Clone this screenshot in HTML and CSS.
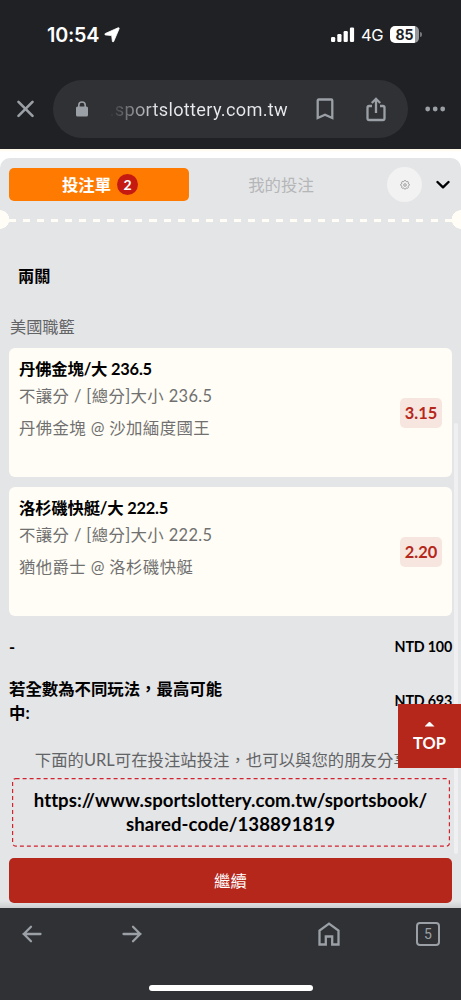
FILE: index.html
```html
<!DOCTYPE html>
<html lang="zh-TW">
<head>
    <meta charset="UTF-8">
    <meta name="viewport" content="width=device-width, initial-scale=1.0">
    <title>投注單</title>
    <link rel="stylesheet" href="styles.css">
</head>
<body>
    <header class="browser-header">
        <div class="status-bar">
            <span class="clock">10:54</span>
            <svg class="location" width="16" height="16" viewBox="0 0 16 16"><path d="M1.300 6.500 14.100.8q1.400-.4 1 1L9.700 14.500q-.7 1.100-1.300 0L7.700 8.600 1.400 7.900Q0 7.300 1.300 6.500z" fill="#fff" stroke="#fff" stroke-width=".8"/></svg>
            <svg class="signal" width="24" height="16" viewBox="0 0 24 16" fill="#fff">
                <rect x="0" y="10" width="4.200" height="5" rx="1.200"/>
                <rect x="6.300" y="7" width="4.200" height="8" rx="1.200"/>
                <rect x="12.600" y="4" width="4.200" height="11" rx="1.200"/>
                <rect x="18.900" y=".5" width="4.200" height="14.500" rx="1.200"/>
            </svg>
            <span class="network">4G</span>
            <span class="battery">85</span>
            <span class="battery-tip"></span>
        </div>
        <div class="address-row">
            <svg class="close" width="18" height="18" viewBox="0 0 18 18" fill="none" stroke="#9aa0a6" stroke-width="2.600" stroke-linecap="round"><path d="M1.500 1.800l14 14M15.500 1.800l-14 14"/></svg>
            <div class="address-bar">
                <svg class="lock" width="14" height="16" viewBox="0 0 14 16"><rect x="1" y="5.500" width="12" height="10" rx="1.500" fill="#9aa0a6"/><path d="M3.800 6V4.200a3.200 3.200 0 0 1 6.400 0V6" fill="none" stroke="#9aa0a6" stroke-width="1.600"/></svg>
                <span class="address">.sportslottery.com.tw</span>
                <svg class="bookmark" width="18" height="22" viewBox="0 0 18 22" fill="none" stroke="#9aa0a6" stroke-width="2.300"><path d="M1.700 20V2.500q0-1 1-1h12.600q1 0 1 1V20L9 16.800z"/></svg>
                <svg class="share" width="20" height="25" viewBox="0 0 20 25" fill="none" stroke="#9aa0a6" stroke-width="2.300"><path d="M6 9H3.200Q1.500 9 1.500 10.700v10.600Q1.500 23 3.200 23h13.600q1.700 0 1.700-1.700V10.700Q18.500 9 16.800 9H14M10 16V2M5.800 6 10 1.800 14.200 6"/></svg>
            </div>
            <svg class="more" width="22" height="6" viewBox="0 0 22 6" fill="#9aa0a6"><circle cx="2.700" cy="3" r="2.400"/><circle cx="10.200" cy="3" r="2.400"/><circle cx="17.700" cy="3" r="2.400"/></svg>
        </div>
    </header>

    <main class="page">
        <section class="betslip">
            <div class="tabs">
                <button class="tab tab-active">投注單<span class="count">2</span></button>
                <button class="tab">我的投注</button>
                <button class="settings">
                    <svg width="10" height="10" viewBox="0 0 10 10" fill="none" stroke="#8c8c8c" stroke-width=".8"><path d="M4.100 1.300 4.500.5h1l.4.800.9.400.9-.3.700.7-.3.900.4.900.800.400v1l-.8.400-.4.900.3.900-.7.700-.9-.3-.9.400-.4.800h-1l-.4-.8-.9-.4-.9.300-.7-.7.300-.9-.4-.9-.8-.4v-1l.8-.4.4-.9-.3-.9.700-.7.900.3z"/><circle cx="5" cy="5" r="1.300"/></svg>
                </button>
                <svg class="collapse" width="14" height="9" viewBox="0 0 14 9" fill="none" stroke="#000" stroke-width="2.400" stroke-linecap="round" stroke-linejoin="round"><path d="M1.500 2 7 7.300 12.500 2"/></svg>
            </div>

            <div class="divider"></div>

            <h2 class="slip-title">兩關</h2>
            <h3 class="league">美國職籃</h3>

            <article class="bet">
                <div>
                    <h4>丹佛金塊/大 236.5</h4>
                    <p>不讓分 / [總分]大小 236.5</p>
                    <p class="match">丹佛金塊 @ 沙加緬度國王</p>
                </div>
                <span class="odds">3.15</span>
            </article>
            <article class="bet">
                <div>
                    <h4>洛杉磯快艇/大 222.5</h4>
                    <p>不讓分 / [總分]大小 222.5</p>
                    <p class="match">猶他爵士 @ 洛杉磯快艇</p>
                </div>
                <span class="odds">2.20</span>
            </article>

            <div class="total total-stake">
                <span>-</span>
                <span class="amount">NTD 100</span>
            </div>
            <div class="total">
                <span class="total-label">若全數為不同玩法，最高可能中:</span>
                <span class="amount">NTD 693</span>
            </div>

            <p class="share-text">下面的URL可在投注站投注，也可以與您的朋友分享。</p>
            <div class="share-code">
                <svg class="share-border" width="438" height="69"><rect x=".6" y=".6" width="436.800" height="67.500" rx="3"/></svg>
                https://www.sportslottery.com.tw/sportsbook/<br>shared-code/138891819
            </div>
            <button class="continue">繼續</button>
        </section>
        <div class="scrollbar"></div>
        <button class="back-top"><span class="arrow"></span>TOP</button>
    </main>

    <nav class="browser-nav">
        <svg class="nav-back" width="20" height="18" viewBox="0 0 20 18"><path d="M18.500 9h-17M9 1.800 1.800 9 9 16.200"/></svg>
        <svg class="nav-forward" width="20" height="18" viewBox="0 0 20 18"><path d="M1.500 9h17M11 1.800 18.200 9 11 16.200"/></svg>
        <svg class="nav-home" width="22" height="24" viewBox="0 0 22 24"><path d="M1.500 22.500V8.700L11 1.600l9.500 7.100v13.800h-6.300v-8H7.800v8z"/></svg>
        <span class="tab-count">5</span>
        <div class="home-indicator"></div>
    </nav>
</body>
</html>
```
FILE: styles.css
```css
:root {
    --chrome: #202124;
    --chrome-light: #303134;
    --icon: #9aa0a6;
    --red: #b5261b;
    --orange: #ff7a00;
    --cream: #fffdf5;
    --grey: #e4e5e7;
}

* {
    box-sizing: border-box;
}

body {
    margin: 0;
    height: 1000px;
    overflow: hidden;
    display: flex;
    flex-direction: column;
    font-family: Lato, "Noto Sans CJK TC", sans-serif;
    font-size: 16.4px;
    background: #fff;
    color: #000;
}

h2, h3, h4, p {
    margin: 0;
}

button {
    border: none;
    padding: 0;
    font: inherit;
    background: none;
}

svg {
    display: block;
    flex: none;
}

/* Browser header */
.browser-header {
    height: 149px;
    background: var(--chrome);
    font-family: Inter, sans-serif;
}

.status-bar {
    display: flex;
    align-items: center;
    height: 80px;
    padding: 0 39px 11px 47px;
    color: #fff;
}

.clock {
    width: 54px;
    font-size: 19.8px;
    font-weight: 600;
    letter-spacing: -0.2px;
}

.location {
    margin-left: 3px;
}

.signal {
    margin-left: auto;
}

.network {
    margin-left: 6px;
    width: 24px;
    font-size: 16.5px;
    letter-spacing: -0.3px;
}

.battery {
    width: 29px;
    height: 17px;
    margin-left: 5px;
    border-radius: 5px;
    background: linear-gradient(to right, #fff 25px, #97989a 25px);
    color: var(--chrome);
    font-size: 14px;
    font-weight: 700;
    line-height: 17px;
    text-align: center;
}

.battery-tip {
    width: 2px;
    height: 5px;
    margin: 0 0 0 1px;
    border-radius: 0 2px 2px 0;
    background: #77787a;
}

.address-row {
    display: flex;
    align-items: center;
    padding-left: 17px;
}

.address-bar {
    display: flex;
    align-items: center;
    width: 355px;
    height: 58px;
    margin-left: 18px;
    padding-left: 22px;
    border-radius: 29px;
    background: var(--chrome-light);
}

.address {
    width: 179px;
    margin-left: 20px;
    font-family: Roboto, sans-serif;
    font-size: 18.2px;
    text-align: right;
    letter-spacing: 0.3px;
    white-space: nowrap;
    color: transparent;
    background: linear-gradient(to right, #303134, #e8eaed 50px);
    -webkit-background-clip: text;
    background-clip: text;
}

.bookmark {
    margin-left: 28px;
}

.share {
    margin-left: 32px;
}

.more {
    margin-left: 17px;
}

/* Bet slip */
.page {
    position: relative;
    height: 759px;
    padding-top: 9px;
    background: linear-gradient(#fff8e6, #fff 3px);
}

.betslip {
    height: 750px;
    padding: 10px 9px 0;
    border-radius: 10px 10px 0 0;
    background: linear-gradient(transparent 743px, rgba(0, 0, 0, 0.1)), var(--grey);
}

.tabs {
    display: flex;
    align-items: center;
    height: 33px;
}

.tab {
    display: flex;
    align-items: center;
    justify-content: center;
    width: 184px;
    height: 33px;
    padding-bottom: 2px;
    color: #b5b6b8;
}

.tab-active {
    width: 180px;
    padding: 0 0 2px 2px;
    border-radius: 5px;
    background: var(--orange);
    color: #fff;
    font-weight: 700;
}

.count {
    width: 21px;
    height: 21px;
    margin: 2px 0 0 6px;
    border-radius: 50%;
    background: #c41a12;
    font-size: 14px;
    line-height: 21px;
}

.settings {
    display: flex;
    align-items: center;
    justify-content: center;
    width: 35px;
    height: 35px;
    margin-left: 14px;
    border-radius: 50%;
    background: #f2f2f2;
}

.collapse {
    margin-left: 14px;
}

.divider {
    height: 19px;
    margin: 9px -9px 0;
    background:
        radial-gradient(circle at 0 50%, var(--cream) 9px, transparent 9.5px),
        radial-gradient(circle at 100% 50%, var(--cream) 9px, transparent 9.5px),
        repeating-linear-gradient(to right, var(--cream) 0 7px, transparent 7px 14.05px) 9px 9px / 443px 3px no-repeat;
}

.slip-title {
    margin: 35px 0 0 9px;
    font-size: 16.2px;
    line-height: 24px;
}

.league {
    margin: 27px 0 9px 1px;
    font-size: 16.2px;
    font-weight: 400;
    line-height: 24px;
    color: #626365;
}

.bet {
    display: flex;
    align-items: center;
    justify-content: space-between;
    width: 443px;
    height: 129px;
    margin-bottom: 10px;
    padding: 0 10px;
    border-radius: 6px;
    background: var(--cream);
    color: #707070;
}

.bet > div {
    align-self: flex-start;
    padding-top: 9px;
}

.bet h4 {
    font-size: 16.4px;
    letter-spacing: -0.22px;
    line-height: 24px;
    color: #000;
}

.bet p {
    margin-top: 3px;
    letter-spacing: 0.38px;
    line-height: 24px;
}

.bet .match {
    margin-top: 8px;
}

.odds {
    width: 42px;
    height: 30px;
    border-radius: 5px;
    background: #f7e6df;
    color: var(--red);
    font-weight: 700;
    line-height: 30px;
    text-align: center;
}

.total {
    display: flex;
    align-items: center;
    justify-content: space-between;
    font-weight: 700;
    line-height: 24px;
}

.total-stake {
    margin: 19px 0 18px;
}

.total-label {
    width: 222px;
}

.amount {
    font-size: 14.3px;
    letter-spacing: -0.2px;
}

.share-text {
    margin: 23px 0 6px;
    line-height: 24px;
    text-align: center;
    white-space: nowrap;
    color: #626365;
}

.share-code {
    position: relative;
    height: 69px;
    margin: 0 3px;
    padding-top: 10px;
    font-size: 18.6px;
    font-weight: 700;
    letter-spacing: 0.06px;
    line-height: 24px;
    text-align: center;
}

.share-border {
    position: absolute;
    top: 0;
    left: 0;
    fill: none;
    stroke: #d2232f;
    stroke-width: 1.2;
    stroke-dasharray: 4 3;
}

.continue {
    display: block;
    width: 443px;
    height: 45px;
    margin-top: 11px;
    padding-bottom: 2px;
    border-radius: 5px;
    background: var(--red);
    color: #fff;
}

.scrollbar {
    position: absolute;
    top: 274px;
    right: 3px;
    width: 4px;
    height: 431px;
    border-radius: 2px;
    background: #f0f0f2;
}

.back-top {
    position: absolute;
    top: 555px;
    right: 0;
    width: 63px;
    height: 64px;
    padding-bottom: 1px;
    background: var(--red);
    color: #fff;
    font-size: 16.4px;
    font-weight: 700;
    line-height: 20px;
}

.back-top .arrow {
    display: block;
    width: 10px;
    height: 5px;
    margin: 3px auto 6px;
    background: #fff;
    clip-path: polygon(50% 0, 100% 100%, 0 100%);
}

/* Browser navigation */
.browser-nav {
    position: relative;
    display: flex;
    align-items: center;
    height: 92px;
    padding: 0 21px 40px 22px;
    background: var(--chrome-light);
}

.browser-nav svg {
    fill: none;
    stroke: var(--icon);
    stroke-width: 2.3;
    stroke-linecap: round;
    stroke-linejoin: round;
}

.browser-nav .nav-home {
    margin-left: auto;
    stroke-linejoin: miter;
}

.nav-forward {
    margin-left: 80px;
}

.tab-count {
    width: 24px;
    height: 24px;
    margin-left: 76px;
    border: 2px solid var(--icon);
    border-radius: 4px;
    color: var(--icon);
    font-family: Roboto, sans-serif;
    font-size: 14px;
    line-height: 20px;
    text-align: center;
}

.home-indicator {
    position: absolute;
    bottom: 9px;
    left: 149px;
    width: 164px;
    height: 6px;
    border-radius: 3px;
    background: #fff;
}
```
